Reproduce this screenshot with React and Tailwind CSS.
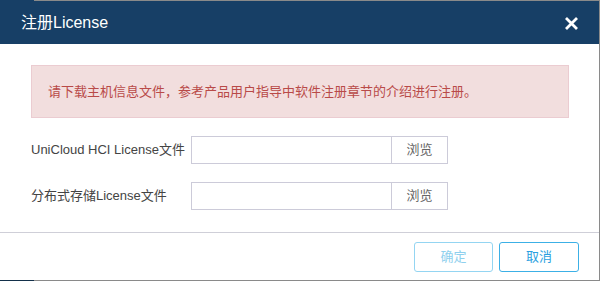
export default function App() {
  const font = { fontFamily: '"Liberation Sans", Arial, "Noto Sans CJK SC", sans-serif' };
  return (
    <div className="w-[602px] h-[282px] bg-white overflow-hidden" style={font}>
      <div className="w-[600px] h-[281px] flex flex-col border-r border-[#8a8a8a]">
        <div className="h-px flex shrink-0">
          <div className="w-[34px] bg-[#173f66]" />
          <div className="flex-1 bg-[#8a8a8a]" />
        </div>
        <div className="h-[43px] shrink-0 bg-[#173f66] flex items-center justify-between pl-[21px] pr-[20px]">
          <span className="text-white text-[16px] leading-none">注册License</span>
          <svg width="15" height="15" viewBox="0 0 15 15" className="mt-[1px]">
            <path d="M2 2 L13 13 M13 2 L2 13" stroke="#ffffff" strokeWidth="2.8" strokeLinecap="butt" />
          </svg>
        </div>
        <div className="flex-1 flex flex-col">
          <div className="mt-[21px] ml-[31px] w-[538px] h-[53px] bg-[#f2dede] border border-[#ebccd1] flex items-center pl-[16px] text-[13px] text-[#b94a48]">
            请下载主机信息文件，参考产品用户指导中软件注册章节的介绍进行注册。
          </div>
          <div className="mt-[18px] ml-[31px] flex flex-col gap-[18px]">
            {["UniCloud HCI License文件", "分布式存储License文件"].map((l) => (
              <div key={l} className="flex items-center h-[28px]">
                <div className="w-[160px] text-[13px] text-[#444444]">{l}</div>
                <div className="w-[201px] h-[28px] border border-[#cccbd9]" />
                <div className="w-[56px] h-[28px] border border-l-0 border-[#cccbd9] flex items-center justify-center text-[13px] text-[#666666]">
                  浏览
                </div>
              </div>
            ))}
          </div>
          <div className="mt-[22px] h-px bg-[#cfcfd8]" />
          <div className="flex justify-end gap-[6px] pr-[20px] pt-[9px]">
            <button className="w-[79px] h-[30px] rounded-[3px] border border-[#94d5f2] text-[#8fd0ee] text-[13px] bg-white">
              确定
            </button>
            <button className="w-[80px] h-[30px] rounded-[3px] border border-[#3cb0e6] text-[#2b9fe0] text-[13px] bg-white">
              取消
            </button>
          </div>
        </div>
        <div className="h-px flex shrink-0">
          <div className="w-[34px] bg-[#13304a]" />
          <div className="flex-1 bg-[#8a8a8a]" />
        </div>
      </div>
    </div>
  );
}
